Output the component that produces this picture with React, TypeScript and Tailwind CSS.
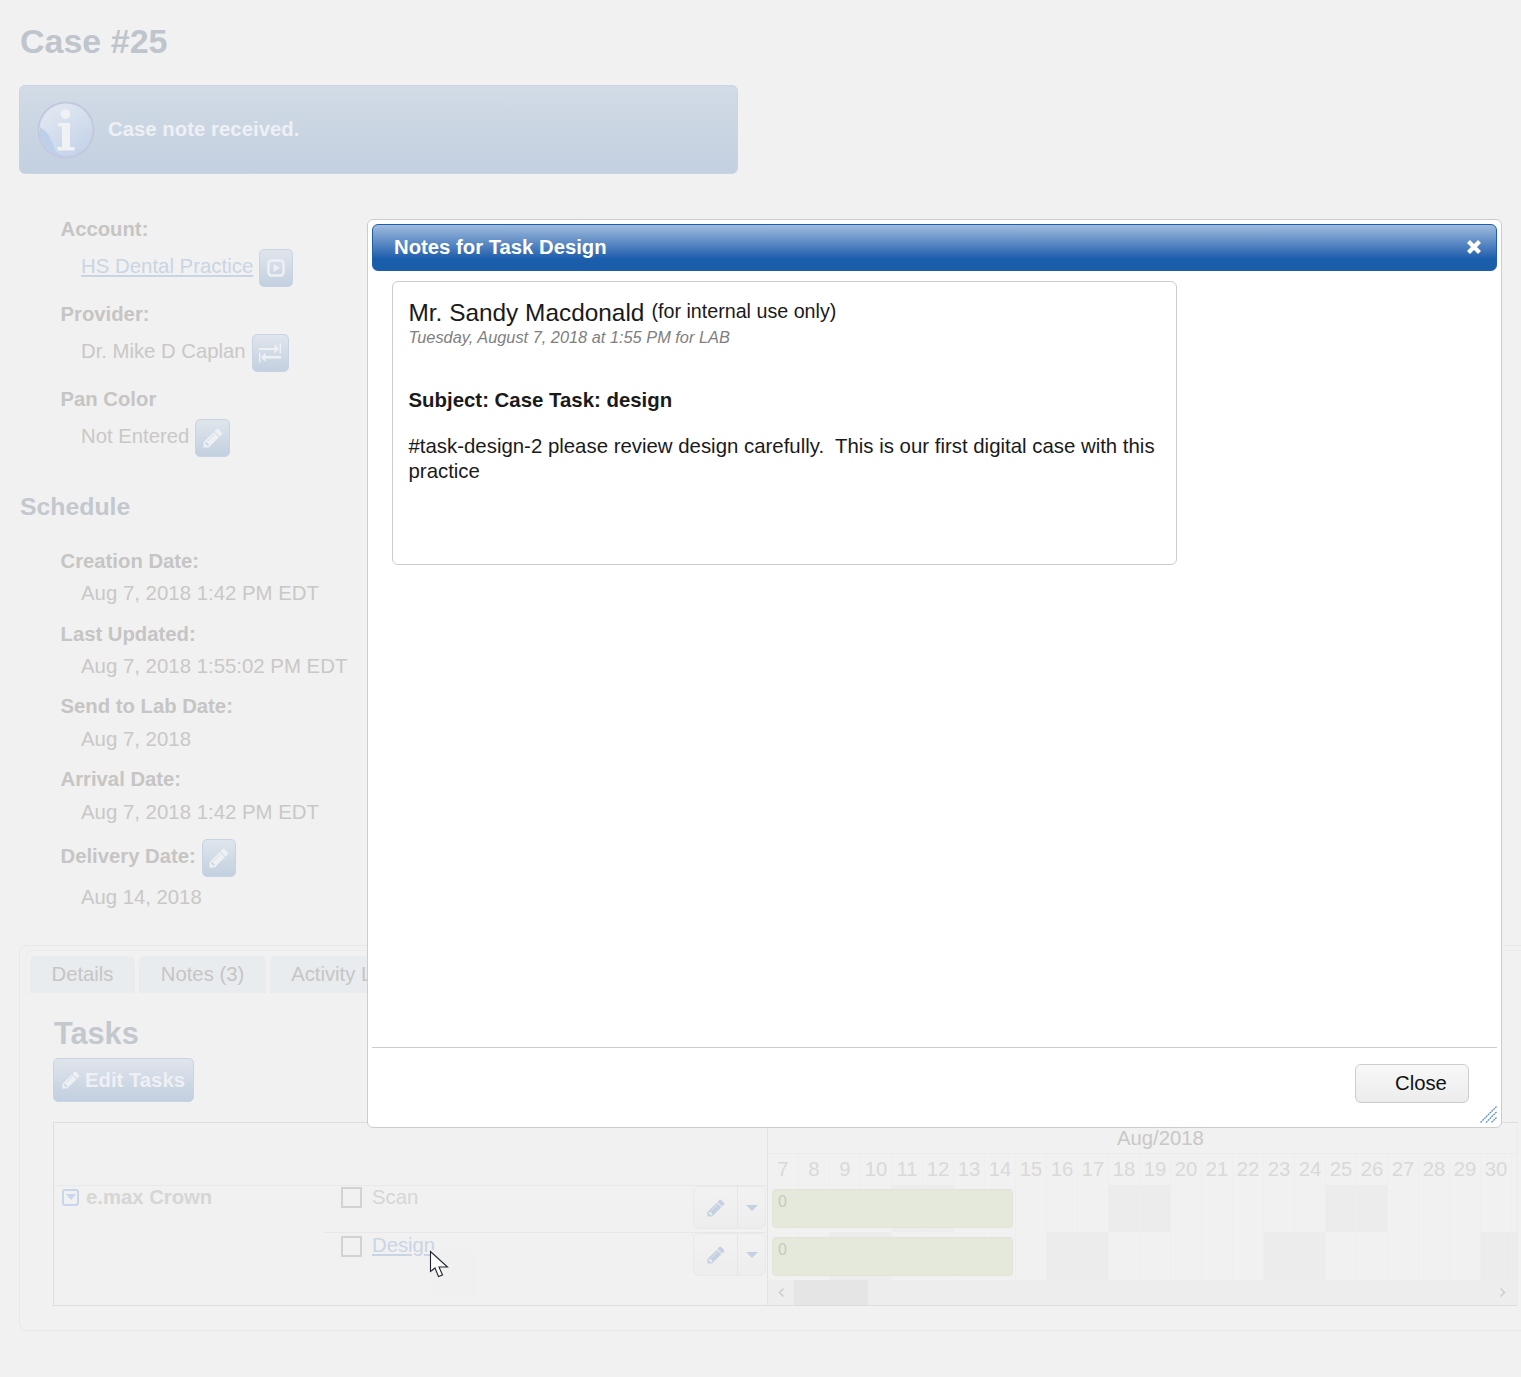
import React from "react";

const PENCIL = "M491 1536l91-91-235-235-91 91v107h128v128h107zm523-928q0-22-22-22-10 0-17 7l-542 542q-7 7-7 17 0 22 22 22 10 0 17-7l542-542q7-7 7-17zm-54-192l416 416-832 832h-416v-416zm683 96q0 53-37 90l-166 166-416-416 165-166q36-38 90-38 53 0 91 38l235 234q37 39 37 92z";

function Pencil({ size, color }: { size: number; color: string }) {
  return (
    <svg width={size} height={size} viewBox="0 0 1792 1792" fill={color}>
      <path d={PENCIL} />
    </svg>
  );
}

function IconButton({ w, children }: { w: string; children: React.ReactNode }) {
  return (
    <div className={`${w} h-[38px] shrink-0 rounded-[5px] border border-[#c8d4e3] bg-gradient-to-b from-[#dfe5ec] to-[#c3d0e0] flex items-center justify-center`}>
      {children}
    </div>
  );
}

function Field({ label, value, mb, labelH }: { label: string; value: string; mb: string; labelH: string }) {
  return (
    <div className={mb}>
      <div className={`${labelH} pl-[41.5px] flex items-center text-[20.3px] font-bold text-[#c6c5c4]`}>{label}</div>
      <div className="h-[32px] pl-[62px] flex items-center text-[20.4px] text-[#c9c8c6]">{value}</div>
    </div>
  );
}

function ActionGroup() {
  return (
    <div className="mr-[1px] w-[73px] h-[43px] rounded-[6px] border border-[#e9e9e9] bg-gradient-to-b from-[#f2f2f2] to-[#ededed] flex">
      <div className="w-[44px] border-r border-[#e6e6e6] flex items-center justify-center">
        <Pencil size={20} color="#c5d1e2" />
      </div>
      <div className="flex-1 flex items-center justify-center">
        <div className="w-0 h-0 border-l-[6px] border-r-[6px] border-t-[6px] border-l-transparent border-r-transparent border-t-[#c5d1e2]" />
      </div>
    </div>
  );
}

function Checkbox() {
  return <div className="w-[21px] h-[21px] border-2 border-[#d2d2d2]" />;
}

const DAYS = [7, 8, 9, 10, 11, 12, 13, 14, 15, 16, 17, 18, 19, 20, 21, 22, 23, 24, 25, 26, 27, 28, 29, 30, 31];

function TrackRow({ h, dark, top }: { h: string; dark: number[]; top: string }) {
  return (
    <div className={`${h} relative flex`}>
      {DAYS.map((d) => (
        <div key={d} className={`w-[31px] shrink-0 border-r border-[#eeeeee] ${dark.includes(d) ? "bg-[#ececec]" : ""}`} />
      ))}
      <div className={`absolute left-[4px] ${top} w-[241px] h-[39px] rounded-[4px] border border-[#e0e5d8] bg-[#e4e9dc] pl-[5px] text-[16px] leading-[24px] text-[#c8c9bf]`}>0</div>
    </div>
  );
}

export default function App() {
  return (
    <div className="relative w-[1521px] h-[1377px] overflow-hidden bg-[#f1f1f1] font-['Liberation_Sans',Arial,sans-serif]">
      {/* Dimmed page */}
      <div className="pl-[19px] pt-[20px]">
        <h1 className="pl-[1px] h-[42px] flex items-center text-[34px] font-bold text-[#bfc5cd]">Case #25</h1>
        <div className="mt-[23px] w-[719px] h-[89px] rounded-[6px] border border-[#c9d5e4] bg-gradient-to-b from-[#d2dbe6] to-[#c3d0e0] flex items-center pl-[17px]">
          <svg width="58" height="58" viewBox="0 0 58 58">
            <defs>
              <linearGradient id="infoG" x1="0.2" y1="0" x2="0.8" y2="1">
                <stop offset="0" stopColor="#e4e9f2" />
                <stop offset="1" stopColor="#c2d1e8" />
              </linearGradient>
            </defs>
            <circle cx="29" cy="29" r="27.5" fill="url(#infoG)" stroke="#c4c8de" strokeWidth="2" />
            <path d="M3 26 Q14 32 18 50 Q24 55 29 55.5 Q12 56 3 36Z" fill="#bdd0ea" />
            <circle cx="28.5" cy="13" r="4.8" fill="#f0f1f2" />
            <path d="M21 22h12v24h4.5v3.5h-17V46H25V25.5h-4z" fill="#f0f1f2" />
          </svg>
          <span className="ml-[13px] mb-[1px] text-[20.3px] font-bold text-[#eef0f3] tracking-[0.05px]">Case note received.</span>
        </div>

        <div className="mt-[36px] pl-[41.5px]">
          <div className="h-[39px] flex items-center text-[20.3px] font-bold text-[#c6c5c4]">Account:</div>
          <div className="h-[38px] pl-[20.5px] flex items-center text-[20.4px] text-[#c9d5e5] underline">
            <span className="mt-[-4px]">HS Dental Practice</span>
            <div className="ml-[6px]">
              <IconButton w="w-[34px]">
                <svg width="18" height="18" viewBox="0 0 18 18" fill="none">
                  <rect x="1.5" y="1.5" width="15" height="15" rx="3" stroke="#eef0f3" strokeWidth="2.4" />
                  <path d="M6.5 5 L13 9 L6.5 13Z" fill="#eef0f3" />
                </svg>
              </IconButton>
            </div>
          </div>
          <div className="mt-[8px] h-[39px] flex items-center text-[20.3px] font-bold text-[#c6c5c4]">Provider:</div>
          <div className="h-[38px] pl-[20.5px] flex items-center text-[20.3px] text-[#c9c8c6]">
            <span className="mt-[-4px]">Dr. Mike D Caplan</span>
            <div className="ml-[6px]">
              <IconButton w="w-[37px]">
                <svg width="22" height="20" viewBox="0 0 22 20" fill="#eef0f3">
                  <path d="M0 5h15.5V1l4.500 4.800-4.500 4.800V7H0z" />
                  <rect x="20.500" y="0.500" width="1.500" height="10" />
                  <path d="M22 13H6.500V9.400L2 14.200 6.500 19V15.500H22z" />
                  <rect x="0" y="9.500" width="1.500" height="10" />
                </svg>
              </IconButton>
            </div>
          </div>
          <div className="mt-[8px] h-[39px] flex items-center text-[20.3px] font-bold text-[#c6c5c4]">Pan Color</div>
          <div className="h-[38px] pl-[20.5px] flex items-center text-[20.3px] text-[#c9c8c6]">
            <span className="mt-[-4px]">Not Entered</span>
            <div className="ml-[6px]">
              <IconButton w="w-[35px]">
                <Pencil size={22} color="#eef0f3" />
              </IconButton>
            </div>
          </div>
        </div>

        <h2 className="mt-[35px] pl-[1px] h-[30px] flex items-center text-[24.8px] font-bold text-[#c3c8cf]">Schedule</h2>

        <div className="mt-[23px]">
          <Field label="Creation Date:" value="Aug 7, 2018 1:42 PM EDT" mb="mb-[9px]" labelH="h-[32px]" />
          <Field label="Last Updated:" value="Aug 7, 2018 1:55:02 PM EDT" mb="mb-[7px]" labelH="h-[32px]" />
          <Field label="Send to Lab Date:" value="Aug 7, 2018" mb="mb-[7px]" labelH="h-[34px]" />
          <Field label="Arrival Date:" value="Aug 7, 2018 1:42 PM EDT" mb="mb-[11px]" labelH="h-[34px]" />
          <div className="h-[38px] pl-[41.5px] flex items-center text-[20.3px] font-bold text-[#c6c5c4]">
            <span className="mt-[-4px]">Delivery Date:</span>
            <div className="ml-[6px]">
              <IconButton w="w-[34px]">
                <Pencil size={22} color="#eef0f3" />
              </IconButton>
            </div>
          </div>
          <div className="mt-[4px] h-[32px] pl-[62px] flex items-center text-[20.3px] text-[#c9c8c6]">Aug 14, 2018</div>
        </div>

        {/* Tab panel */}
        <div className="mt-[32px] w-[1600px] h-[386px] rounded-[8px] border border-[#e8e8e8] pt-[4px] pl-[5px]">
          <div className="h-[43px] rounded-t-[8px] border border-b-0 border-[#ececec] pt-[5px] pl-[4px] flex gap-[4px]">
            {[["Details", "w-[105px]"], ["Notes (3)", "w-[127px]"], ["Activity Log", "w-[146px]"]].map(([t, w]) => (
              <div key={t} className={`${w} h-[37px] pb-[1px] rounded-t-[6px] bg-[#e9ecef] flex items-center justify-center text-[20.3px] text-[#c6c5c4]`}>{t}</div>
            ))}
          </div>
          <div className="pl-[28px]">
            <h3 className="mt-[24px] pl-[1px] h-[34px] flex items-center text-[30.7px] font-bold text-[#c3c8cf]">Tasks</h3>
            <div className="mt-[7px] w-[141px] h-[44px] rounded-[5px] border border-[#c8d4e3] bg-gradient-to-b from-[#e0e5ec] to-[#c1cfdf] flex items-center pl-[7px] gap-[4px] text-[20.3px] font-bold text-[#eef0f3]">
              <Pencil size={20} color="#eef0f3" />
              <span>Edit Tasks</span>
            </div>

            {/* Gantt */}
            <div className="mt-[20px] w-[1465px] h-[184px] border border-[#dddddd] border-r-[#ececec] flex">
              <div className="w-[714px] shrink-0 border-r border-[#e2e2e2]">
                <div className="h-[62px]" />
                <div className="flex border-t border-[#e8e8e8]">
                  <div className="w-[270px] pl-[8px] h-[22px] flex items-center gap-[7px]">
                    <div className="w-[17px] h-[17px] rounded-[3px] border-2 border-[#c7d6ea] flex items-center justify-center">
                      <div className="w-0 h-0 border-l-[5px] border-r-[5px] border-t-[6px] border-l-transparent border-r-transparent border-t-[#c7d6ea]" />
                    </div>
                    <span className="text-[20.3px] font-bold text-[#d6d6d5]">e.max Crown</span>
                  </div>
                  <div className="flex-1">
                    <div className="h-[46px] pl-[17px] flex items-start">
                      <div className="mt-[1px]"><Checkbox /></div>
                      <span className="ml-[10px] text-[20.3px] leading-[22px] text-[#d6d6d5]">Scan</span>
                      <div className="ml-auto"><ActionGroup /></div>
                    </div>
                    <div className="h-[48px] border-t border-[#e8e8e8] pl-[17px] flex items-start">
                      <div className="mt-[3px]"><Checkbox /></div>
                      <span className="ml-[10px] text-[20.3px] leading-[24px] text-[#c9d5e5] underline">Design</span>
                      <div className="ml-auto"><ActionGroup /></div>
                    </div>
                  </div>
                </div>
              </div>
              <div className="flex-1 overflow-hidden">
                <div className="h-[30px] pl-[349px] flex items-center text-[20.3px] text-[#c9c8c6]">Aug/2018</div>
                <div className="h-[32px] flex border-t border-[#ebebeb]">
                  {DAYS.map((d) => (
                    <div key={d} className="w-[31px] shrink-0 border-r border-[#eeeeee] flex items-center justify-center text-[20.3px] text-[#d9d9d8]">{d}</div>
                  ))}
                </div>
                <TrackRow h="h-[47px]" dark={[11, 12, 18, 19, 25, 26]} top="top-[4px]" />
                <TrackRow h="h-[48px]" dark={[9, 10, 16, 17, 23, 24, 30, 31]} top="top-[5px]" />
                <div className="h-[25px] bg-[#ededed] flex items-center">
                  <div className="w-[26px] flex justify-center">
                    <svg width="9" height="11" viewBox="0 0 9 11" fill="none" stroke="#cfcfcf" strokeWidth="1.600"><path d="M6.500 1.500 L2.500 5.500 L6.500 9.500" /></svg>
                  </div>
                  <div className="w-[74px] h-full bg-[#e5e5e5]" />
                  <div className="ml-auto w-[30px] flex justify-center">
                    <svg width="9" height="11" viewBox="0 0 9 11" fill="none" stroke="#cfcfcf" strokeWidth="1.600"><path d="M2.500 1.500 L6.500 5.500 L2.500 9.500" /></svg>
                  </div>
                </div>
              </div>
            </div>
          </div>
        </div>
      </div>

      {/* Cursor shadow and cursor */}
      <div className="absolute left-[430px] top-[1250px] w-[47px] h-[48px] bg-[#f0f0f0]" />
      <svg className="absolute left-[429px] top-[1250px]" width="21" height="30" viewBox="0 0 21 30">
        <path d="M1.500 1.500 V21.500 L6 18 L9.500 26.500 L13.500 25 L10 17 L18.500 17 Z" fill="#ffffff" stroke="#1f2430" strokeWidth="1.100" strokeLinejoin="miter" />
      </svg>

      {/* Modal */}
      <div className="absolute left-[367px] top-[219px] w-[1135px] h-[909px] rounded-[6px] border border-[#cccccc] bg-white p-[4px] flex flex-col">
        <div className="h-[47px] shrink-0 rounded-[6px] border border-[#1d5fae] bg-gradient-to-b from-[#a0bcdd] via-[#1a5dab] via-[75%] to-[#1a5dab] flex items-center justify-between pl-[21px] pr-[15px]">
          <span className="mb-[1px] text-[20.3px] font-bold text-white">Notes for Task Design</span>
          <svg className="mb-[1px]" width="14" height="14" viewBox="0 0 14 14" stroke="#ffffff" strokeWidth="4.200">
            <path d="M1.500 1.500 L12.500 12.500 M12.500 1.500 L1.500 12.500" />
          </svg>
        </div>
        <div className="flex-1 pl-[20px] pt-[10px]">
          <div className="w-[785px] h-[284px] rounded-[6px] border border-[#cccccc] pl-[15.5px] pr-[16px] pt-[17px] text-[#1a1a1a]">
            <div className="h-[28px] flex items-center">
              <span className="text-[24.4px]">Mr. Sandy Macdonald</span>
              <span className="ml-[7px] text-[19.7px] mt-[-3px]">(for internal use only)</span>
            </div>
            <div className="h-[20px] flex items-center text-[16.35px] italic text-[#808080]">Tuesday, August 7, 2018 at 1:55 PM for LAB</div>
            <div className="mt-[40px] h-[26px] flex items-center text-[20.4px] font-bold">Subject: Case Task: design</div>
            <p className="mt-[21px] text-[20.4px] leading-[25px] whitespace-pre-wrap">{"#task-design-2 please review design carefully.  This is our first digital case with this practice"}</p>
          </div>
        </div>
        <div className="h-[76px] shrink-0 border-t border-[#cccccc] pt-[16px] flex justify-end pr-[28px]">
          <button className="w-[114px] h-[39px] rounded-[6px] border border-[#cccccc] bg-gradient-to-b from-[#f8f8f8] to-[#ececec] pl-[39px] text-left text-[20.3px] text-[#111111]">Close</button>
        </div>
        <svg className="absolute right-[4px] bottom-[4px]" width="17" height="17" viewBox="0 0 17 17" stroke="#5f92cc" strokeWidth="1.300" fill="none">
          <path d="M0.500 16.500 L16.500 0.500 M6 16.500 L16.500 6 M11.500 16.500 L16.500 11.500" strokeDasharray="2 0.600" />
        </svg>
      </div>
    </div>
  );
}
